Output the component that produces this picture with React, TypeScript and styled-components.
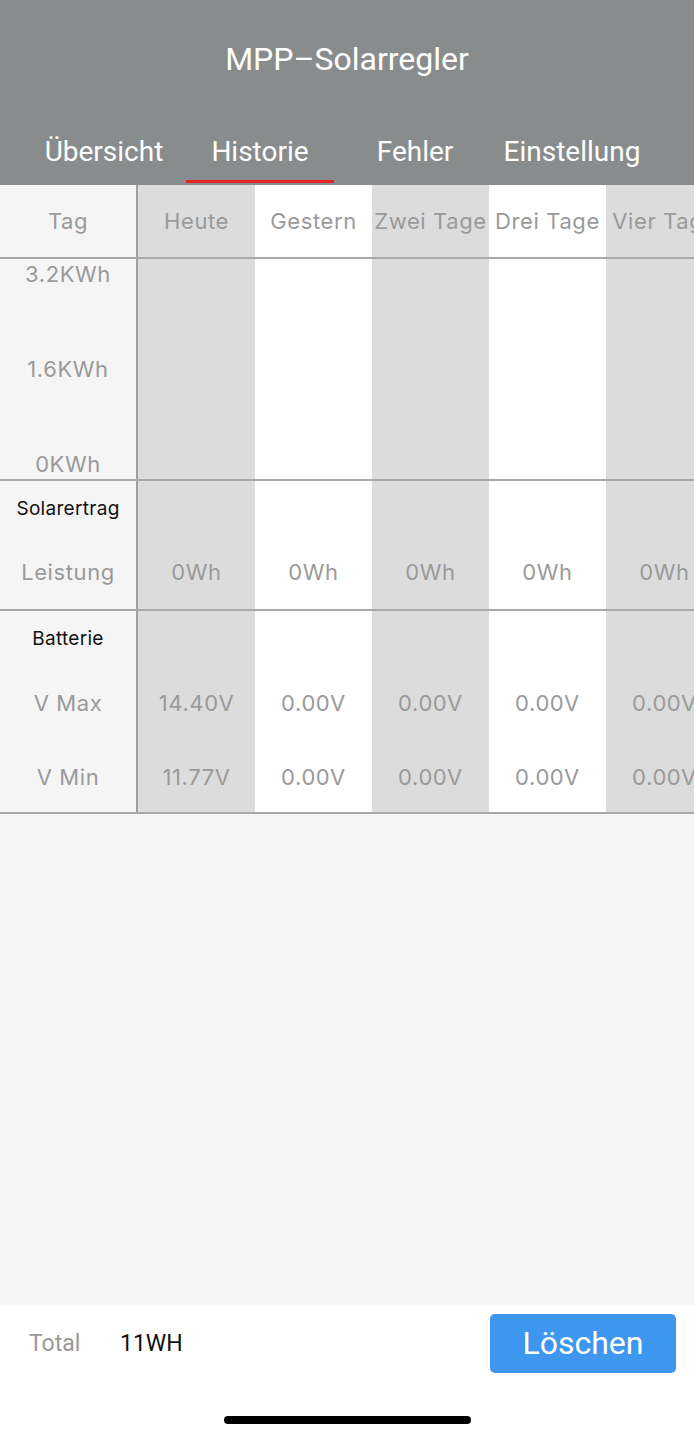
import React from 'react';
import styled, {createGlobalStyle} from 'styled-components';

const GlobalStyle = createGlobalStyle`
  html, body {
    margin: 0;
    padding: 0;
    background: #f5f5f5;
  }
  * {
    box-sizing: border-box;
  }
`;

const LABEL_W = 138;
const COL_W = 117;

const Screen = styled.div`
  width: 694px;
  height: 1440px;
  display: flex;
  flex-direction: column;
  background: #f5f5f5;
  overflow: hidden;
  font-family: Inter, 'Noto Sans', sans-serif;
`;

const Header = styled.header`
  height: 185px;
  flex-shrink: 0;
  background: #898c8d;
  display: flex;
  flex-direction: column;
  color: #fff;
  font-family: Roboto, 'Liberation Sans', sans-serif;
`;

const Title = styled.h1`
  margin: 0;
  padding-top: 40px;
  height: 118px;
  text-align: center;
  font-size: 32px;
  line-height: 38px;
  font-weight: 400;
`;

const Tabs = styled.nav`
  display: grid;
  grid-template-columns: 164px 148px 162px 152px;
  padding-left: 22px;
  height: 67px;
`;

const Tab = styled.div<{$active?: boolean}>`
  position: relative;
  text-align: center;
  font-size: 28px;
  line-height: 34px;
  padding-top: 17px;
  white-space: nowrap;
  &::after {
    content: '';
    display: ${({$active}) => ($active ? 'block' : 'none')};
    position: absolute;
    left: 0;
    right: 0;
    bottom: 2px;
    height: 3px;
    background: #e0262b;
  }
`;

const Table = styled.div`
  display: flex;
  flex-direction: column;
  flex-shrink: 0;
  width: 694px;
  overflow: hidden;
`;

const Row = styled.div<{$height: number}>`
  display: grid;
  grid-template-columns: ${LABEL_W}px repeat(5, ${COL_W}px);
  grid-template-rows: 100%;
  height: ${({$height}) => $height}px;
  flex-shrink: 0;
  border-bottom: 2px solid #a8a8a8;
  width: ${LABEL_W + COL_W * 5}px;
`;

const LabelCell = styled.div`
  background: #f5f5f5;
  border-right: 2px solid #a0a0a0;
  display: flex;
  flex-direction: column;
  align-items: center;
  color: #9a9a9a;
  min-height: 0;
  overflow: hidden;
`;

const Cell = styled.div<{$shade: boolean}>`
  background: ${({$shade}) => ($shade ? '#dcdcdc' : '#ffffff')};
  display: flex;
  flex-direction: column;
  align-items: center;
  color: #9a9a9a;
  min-height: 0;
  overflow: hidden;
`;

const Line = styled.div<{$h: number; $dark?: boolean; $small?: boolean}>`
  height: ${({$h}) => $h}px;
  flex-shrink: 0;
  display: flex;
  align-items: center;
  justify-content: center;
  color: ${({$dark}) => ($dark ? '#111' : 'inherit')};
  font-size: ${({$small}) => ($small ? '19px' : '22px')};
  letter-spacing: ${({$small}) => ($small ? '0.3px' : '0.6px')};
  white-space: nowrap;
`;

const AxisCell = styled(LabelCell)`
  justify-content: space-between;
`;

const Filler = styled.div`
  flex: 1;
  background: #f5f5f5;
`;

const Footer = styled.footer`
  height: 135px;
  flex-shrink: 0;
  background: #fff;
  display: flex;
  flex-direction: column;
`;

const TotalBar = styled.div`
  display: flex;
  align-items: center;
  height: 76px;
  padding: 0 18px 0 29px;
  font-family: Roboto, 'Liberation Sans', sans-serif;
`;

const TotalLabel = styled.span`
  color: #999;
  font-size: 23px;
  width: 91px;
`;

const TotalValue = styled.span`
  color: #111;
  font-size: 23px;
  flex: 1;
`;

const ClearButton = styled.button`
  width: 186px;
  height: 59px;
  border: none;
  border-radius: 5px;
  background: #3d97ee;
  color: #fff;
  font-family: Roboto, 'Liberation Sans', sans-serif;
  font-size: 32px;
  padding: 0;
`;

const HomeBar = styled.div`
  width: 247px;
  height: 8px;
  border-radius: 4px;
  background: #000;
  margin: 35px auto 0;
`;

const days = ['Heute', 'Gestern', 'Zwei Tage', 'Drei Tage', 'Vier Tage'];
const vmax = ['14.40V', '0.00V', '0.00V', '0.00V', '0.00V'];
const vmin = ['11.77V', '0.00V', '0.00V', '0.00V', '0.00V'];

export default function App() {
  return (
    <>
      <GlobalStyle />
      <Screen>
        <Header>
          <Title>MPP–Solarregler</Title>
          <Tabs>
            <Tab>Übersicht</Tab>
            <Tab $active>Historie</Tab>
            <Tab>Fehler</Tab>
            <Tab>Einstellung</Tab>
          </Tabs>
        </Header>
        <Table>
          <Row $height={74}>
            <LabelCell>
              <Line $h={72}>Tag</Line>
            </LabelCell>
            {days.map((d, i) => (
              <Cell key={d} $shade={i % 2 === 0}>
                <Line $h={72}>{d}</Line>
              </Cell>
            ))}
          </Row>
          <Row $height={222}>
            <AxisCell>
              <Line $h={30}>3.2KWh</Line>
              <Line $h={30}>1.6KWh</Line>
              <Line $h={30}>0KWh</Line>
            </AxisCell>
            {days.map((d, i) => (
              <Cell key={d} $shade={i % 2 === 0} />
            ))}
          </Row>
          <Row $height={130}>
            <LabelCell>
              <Line $h={54} $dark $small>
                Solarertrag
              </Line>
              <Line $h={74}>Leistung</Line>
            </LabelCell>
            {days.map((d, i) => (
              <Cell key={d} $shade={i % 2 === 0}>
                <Line $h={54} />
                <Line $h={74}>0Wh</Line>
              </Cell>
            ))}
          </Row>
          <Row $height={203}>
            <LabelCell>
              <Line $h={54} $dark $small>
                Batterie
              </Line>
              <Line $h={76}>V Max</Line>
              <Line $h={71}>V Min</Line>
            </LabelCell>
            {days.map((d, i) => (
              <Cell key={d} $shade={i % 2 === 0}>
                <Line $h={54} />
                <Line $h={76}>{vmax[i]}</Line>
                <Line $h={71}>{vmin[i]}</Line>
              </Cell>
            ))}
          </Row>
        </Table>
        <Filler />
        <Footer>
          <TotalBar>
            <TotalLabel>Total</TotalLabel>
            <TotalValue>11WH</TotalValue>
            <ClearButton>Löschen</ClearButton>
          </TotalBar>
          <HomeBar />
        </Footer>
      </Screen>
    </>
  );
}
